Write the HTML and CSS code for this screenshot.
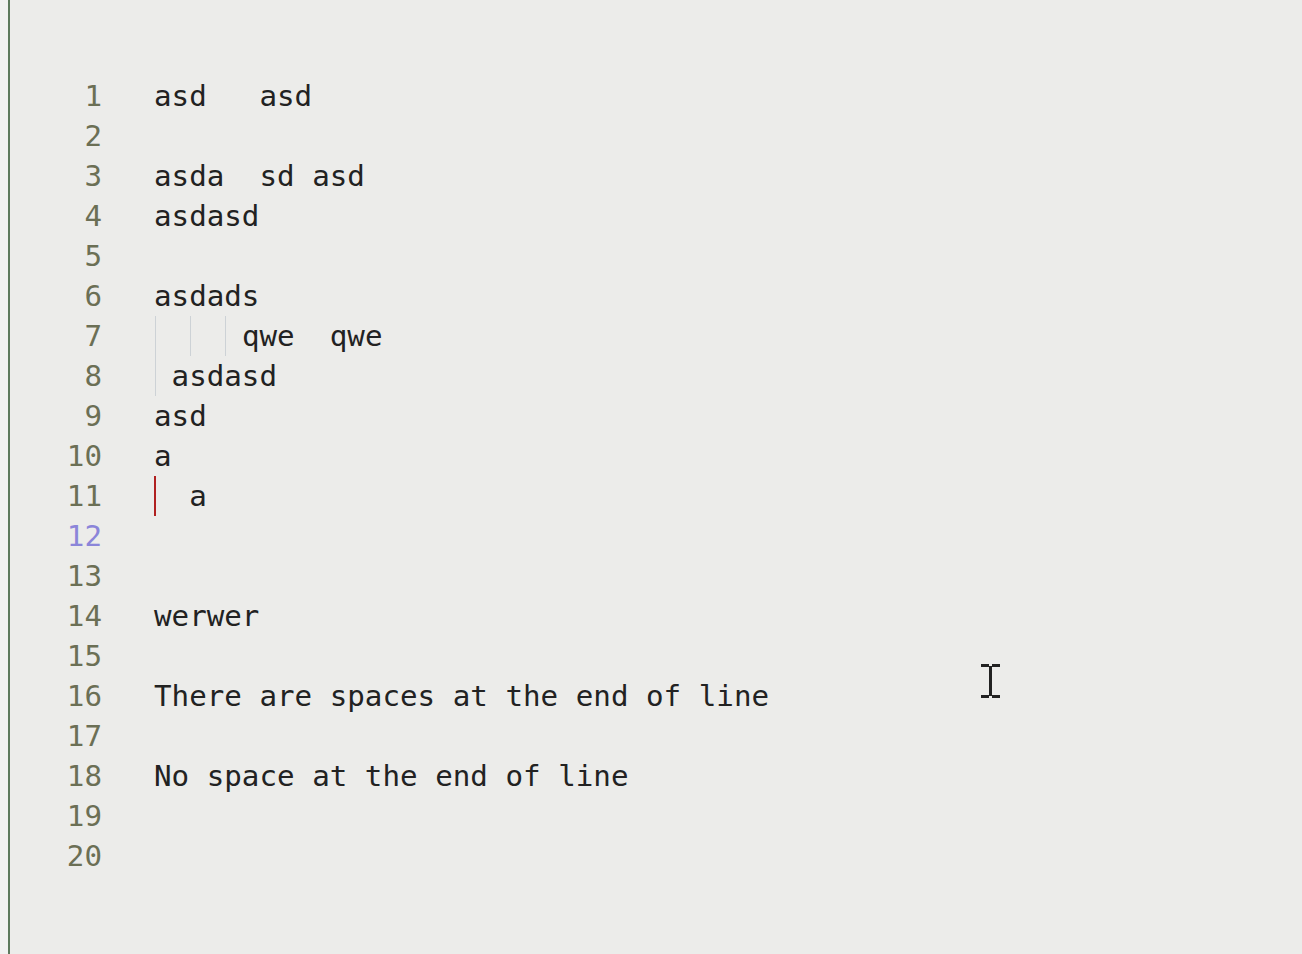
FILE: index.html
```html
<!DOCTYPE html>
<html>
<head>
<meta charset="utf-8">
<link rel="stylesheet" href="styles.css">
</head>
<body>
<div class="app">
  <div class="strip"></div>
  <div class="editor">
    <div class="row"><span class="num">1</span><span class="code">asd   asd</span></div>
    <div class="row"><span class="num">2</span><span class="code"></span></div>
    <div class="row"><span class="num">3</span><span class="code">asda  sd asd</span></div>
    <div class="row"><span class="num">4</span><span class="code">asdasd</span></div>
    <div class="row"><span class="num">5</span><span class="code"></span></div>
    <div class="row"><span class="num">6</span><span class="code">asdads</span></div>
    <div class="row"><span class="num">7</span><span class="code"><span class="ind">  </span><span class="ind">  </span><span class="ind"> </span>qwe  qwe</span></div>
    <div class="row"><span class="num">8</span><span class="code"><span class="ind"> </span>asdasd</span></div>
    <div class="row"><span class="num">9</span><span class="code">asd</span></div>
    <div class="row"><span class="num">10</span><span class="code">a</span></div>
    <div class="row"><span class="num">11</span><span class="code"><span class="mark">  </span>a</span></div>
    <div class="row"><span class="num current">12</span><span class="code"></span></div>
    <div class="row"><span class="num">13</span><span class="code"></span></div>
    <div class="row"><span class="num">14</span><span class="code">werwer</span></div>
    <div class="row"><span class="num">15</span><span class="code"></span></div>
    <div class="row"><span class="num">16</span><span class="code">There are spaces at the end of line</span></div>
    <div class="row"><span class="num">17</span><span class="code"></span></div>
    <div class="row"><span class="num">18</span><span class="code">No space at the end of line</span></div>
    <div class="row"><span class="num">19</span><span class="code"></span></div>
    <div class="row"><span class="num">20</span><span class="code"></span></div>
  </div>
  <svg class="ibeam" width="20" height="34" viewBox="0 0 20 34">
    <rect x="0" y="0" width="8" height="3" fill="#222"/>
    <rect x="11" y="0" width="8" height="3" fill="#222"/>
    <rect x="8" y="2" width="3" height="30" fill="#222"/>
    <rect x="0" y="31" width="8" height="3" fill="#222"/>
    <rect x="11" y="31" width="8" height="3" fill="#222"/>
  </svg>
</div>
</body>
</html>
```

FILE: styles.css
```css
html, body {
  margin: 0;
  padding: 0;
  height: 100%;
  overflow: hidden;
  background: #ececea;
}
.app {
  position: relative;
  display: flex;
  height: 954px;
}
.strip {
  width: 8px;
  background: #f2f2f2;
  border-right: 2px solid #5e7a5e;
  flex: none;
}
.editor {
  flex: 1;
  padding-top: 76px;
  font-family: "DejaVu Sans Mono", monospace;
  font-size: 29.2px;
}
.row {
  display: grid;
  grid-template-columns: 92px 1fr;
  column-gap: 52px;
  height: 40px;
  line-height: 40px;
}
.num {
  text-align: right;
  color: #6b6f55;
}
.num.current {
  color: #8b85d9;
}
.code {
  white-space: pre;
  color: #222222;
}
.ind {
  display: inline-block;
  height: 40px;
  vertical-align: top;
  box-shadow: inset 1px 0 0 #cdd2d6;
  margin-left: 1px;
  margin-right: -1px;
}
.mark {
  display: inline-block;
  height: 40px;
  vertical-align: top;
  box-shadow: inset 2px 0 0 #b02020;
}
.ibeam {
  position: absolute;
  left: 981px;
  top: 664px;
}
```
